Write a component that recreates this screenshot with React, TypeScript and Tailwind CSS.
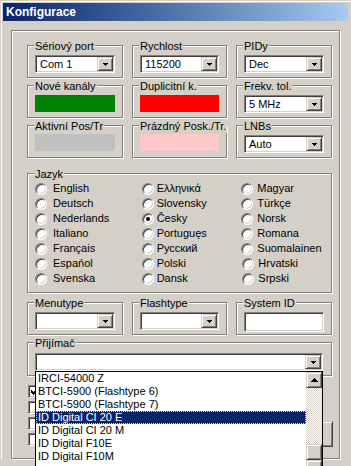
import React from "react";

const sunken =
    "border border-[#808080] border-r-white border-b-white shadow-[inset_1px_1px_0_#404040,inset_-1px_-1px_0_#d4d0c8]";
const raised =
    "border border-[#d4d0c8] border-r-[#404040] border-b-[#404040] bg-[#d4d0c8] shadow-[inset_1px_1px_0_#fff,inset_-1px_-1px_0_#808080]";

function Group({
    label,
    className = "",
    children
}: {
    label?: string;
    className?: string;
    children?: React.ReactNode;
}) {
    return (
        <div
            className={`relative border border-[#808080] shadow-[1px_1px_0_#fff,inset_1px_1px_0_#fff] ${className}`}
        >
            {label && (
                <span className="absolute left-[6px] top-[-6px] whitespace-nowrap bg-[#d4d0c8] px-px leading-[13px]">
                    {label}
                </span>
            )}
            {children}
        </div>
    );
}

function DownArrow() {
    return (
        <svg width="5" height="3" viewBox="0 0 5 3">
            <path d="M0 0h5v1H0zM1 1h3v1H1zM2 2h1v1H2z" fill="#000" />
        </svg>
    );
}

function Combo({ value = "", className = "" }: { value?: string; className?: string }) {
    return (
        <div className={`flex h-[18px] bg-white p-px ${sunken} ${className}`}>
            <span className="flex-1 pl-[3px] leading-[14px]">{value}</span>
            <span className={`flex h-[14px] w-[16px] items-center justify-center ${raised}`}>
                <DownArrow />
            </span>
        </div>
    );
}

function Bar({ color }: { color: string }) {
    return <div className={`h-[17px] ${color}`} />;
}

function Radio({ checked = false }: { checked?: boolean }) {
    return (
        <span
            className={`flex size-[12px] shrink-0 items-center justify-center rounded-full bg-white ${sunken}`}
        >
            {checked && <span className="size-[4px] rounded-full bg-black" />}
        </span>
    );
}

function Check({ checked = false }: { checked?: boolean }) {
    return (
        <span className={`flex size-[13px] items-center justify-center bg-white ${sunken}`}>
            {checked && (
                <svg width="7" height="7" viewBox="0 0 7 7">
                    <path
                        d="M0 2h1v3H0zM1 3h1v3H1zM2 4h1v3H2zM3 3h1v3H3zM4 2h1v3H4zM5 1h1v3H5zM6 0h1v3H6z"
                        fill="#000"
                    />
                </svg>
            )}
        </span>
    );
}

const languages: Array<{ items: Array<string>; w: string; gap: string }> = [
    {
        items: ["English", "Deutsch", "Nederlands", "Italiano", "Français", "Espańol", "Svenska"],
        w: "w-[107px]",
        gap: "gap-[6px]"
    },
    {
        items: ["Ελληνικά", "Slovensky", "Česky", "Portuguęs", "Русский", "Polski", "Dansk"],
        w: "w-[100px]",
        gap: "gap-[3px]"
    },
    {
        items: ["Magyar", "Türkçe", "Norsk", "Romana", "Suomalainen", "Hrvatski", "Srpski"],
        w: "w-[90px]",
        gap: "gap-[4px]"
    }
];

const receivers = [
    "IRCI-54000 Z",
    "BTCI-5900 (Flashtype 6)",
    "BTCI-5900 (Flashtype 7)",
    "ID Digital CI 20 E",
    "ID Digital CI 20 M",
    "ID Digital F10E",
    "ID Digital F10M",
    ""
];

function DropList() {
    return (
        <div className="absolute left-0 top-full z-10 flex h-[106px] w-[288px] border border-black bg-white">
            <div className="flex-1">
                {receivers.map((r, i) =>
                    i === 3 ? (
                        <div
                            key={i}
                            className="h-[13px] whitespace-nowrap border border-dotted border-[#f5db95] bg-[#0a246a] pl-px leading-[11px] text-white"
                        >
                            {r}
                        </div>
                    ) : (
                        <div key={i} className="h-[13px] whitespace-nowrap pl-[2px] leading-[13px]">
                            {r}
                        </div>
                    )
                )}
            </div>
            <div className="flex w-[16px] flex-col">
                <span className={`flex h-[16px] items-center justify-center ${raised}`}>
                    <svg width="7" height="4" viewBox="0 0 7 4">
                        <path d="M3 0h1v1H3zM2 1h3v1H2zM1 2h5v1H1zM0 3h7v1H0z" fill="#000" />
                    </svg>
                </span>
                <div className="flex flex-1 flex-col justify-end bg-[image:repeating-conic-gradient(#fff_0%_25%,#d4d0c8_0%_50%)] bg-[length:2px_2px]">
                    <span className={`h-[16px] ${raised}`} />
                </div>
                <span className={`flex h-[16px] items-center justify-center ${raised}`}>
                    <svg width="7" height="4" viewBox="0 0 7 4">
                        <path d="M0 0h7v1H0zM1 1h5v1H1zM2 2h3v1H2zM3 3h1v1H3z" fill="#000" />
                    </svg>
                </span>
            </div>
        </div>
    );
}

export default function App() {
    return (
        <div className="relative h-[466px] w-[351px] overflow-hidden bg-[#d4d0c8] font-['Liberation_Sans',Arial,sans-serif] text-[11px] leading-[13px] text-black">
            <div className="pl-px pt-px">
                <div className="border-l border-t border-white pl-px pt-px">
                    <div className="mr-[3px] flex h-[18px] items-center bg-linear-to-r from-[#0a246a] to-[#a6caf0] pl-[3px] text-[12px] font-bold text-white">
                        Konfigurace
                    </div>

                    <div className="pl-[8px] pt-[9px]">
                        <Group className="h-[429px] w-[329px] pl-[15px] pt-[14px]">
                            <div className="grid grid-cols-[96px_95px_96px] gap-x-[9px] gap-y-[7px]">
                                <Group label="Sériový port" className="h-[33px] px-[7px] pt-[9px]">
                                    <Combo value="Com 1" />
                                </Group>
                                <Group label="Rychlost" className="h-[33px] px-[7px] pt-[9px]">
                                    <Combo value="115200" />
                                </Group>
                                <Group label="PIDy" className="h-[33px] px-[7px] pt-[9px]">
                                    <Combo value="Dec" />
                                </Group>

                                <Group label="Nové kanály" className="h-[33px] px-[7px] pt-[9px]">
                                    <Bar color="bg-[#008000]" />
                                </Group>
                                <Group label="Duplicitní k." className="h-[33px] px-[7px] pt-[9px]">
                                    <Bar color="bg-[#ff0000]" />
                                </Group>
                                <Group label="Frekv. tol." className="h-[33px] px-[7px] pt-[9px]">
                                    <Combo value="5 MHz" />
                                </Group>

                                <Group label="Aktivní Pos/Tr" className="h-[33px] px-[7px] pt-[8px]">
                                    <Bar color="bg-[#c0c0c0]" />
                                </Group>
                                <Group label="Prázdný Posk./Tr." className="h-[33px] px-[7px] pt-[8px]">
                                    <Bar color="bg-[#ffc8c8]" />
                                </Group>
                                <Group label="LNBs" className="h-[33px] px-[7px] pt-[9px]">
                                    <Combo value="Auto" />
                                </Group>
                            </div>

                            <Group label="Jazyk" className="mt-[15px] flex h-[120px] w-[305px] pl-[7px] pt-[7px]">
                                {languages.map((col, c) => (
                                    <div key={c} className={`flex flex-col ${col.w}`}>
                                        {col.items.map((name, i) => (
                                            <div
                                                key={name}
                                                className={`flex h-[15px] items-center ${col.gap} ${
                                                    c === 2 && i > 4 ? "pl-[1px]" : ""
                                                }`}
                                            >
                                                <Radio checked={name === "Česky"} />
                                                <span className="whitespace-nowrap">{name}</span>
                                            </div>
                                        ))}
                                    </div>
                                ))}
                            </Group>

                            <div className="mt-[9px] grid grid-cols-[96px_95px_96px] gap-x-[9px]">
                                <Group label="Menutype" className="h-[33px] px-[7px] pt-[9px]">
                                    <Combo />
                                </Group>
                                <Group label="Flashtype" className="h-[33px] px-[7px] pt-[9px]">
                                    <Combo />
                                </Group>
                                <Group label="System ID" className="h-[33px] px-[7px] pt-[9px]">
                                    <div className={`h-[20px] bg-white ${sunken}`} />
                                </Group>
                            </div>

                            <Group label="Přijímač" className="mt-[7px] h-[34px] w-[305px] px-[7px] pt-[10px]">
                                <div className="relative w-[288px]">
                                    <Combo />
                                    <DropList />
                                </div>
                            </Group>

                            <div className="mt-[5px] flex h-[66px] w-[306px]">
                                <div className="ml-px flex flex-col gap-[3px] pt-[4px]">
                                    <Check checked />
                                    <Check />
                                    <Check />
                                    <Check />
                                </div>
                                <span className={`ml-auto mt-auto h-[26px] w-[86px] ${raised}`} />
                            </div>
                        </Group>
                    </div>
                </div>
            </div>
        </div>
    );
}
